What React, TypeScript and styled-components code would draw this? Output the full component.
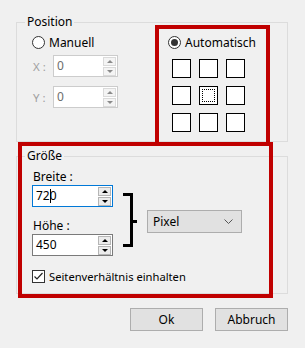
import React from 'react';
import styled, { createGlobalStyle } from 'styled-components';

const GlobalStyle = createGlobalStyle`
  html, body {
    margin: 0;
    padding: 0;
    background: #f0f0f0;
  }
  body {
    font-family: "Noto Sans", "Liberation Sans", sans-serif;
    font-size: 11.5px;
    color: #000;
  }
`;

const Dialog = styled.div`
  position: relative;
  width: 305px;
  height: 348px;
  box-sizing: border-box;
  padding: 22px 17px 0 16px;
  background: #f0f0f0;
  overflow: hidden;
`;

const GroupBox = styled.div<{ $h: number; $mt?: number }>`
  position: relative;
  box-sizing: border-box;
  height: ${p => p.$h}px;
  margin-top: ${p => p.$mt || 0}px;
  border: 1px solid #dcdcdc;
`;

const GroupTitle = styled.span`
  position: absolute;
  left: 8px;
  top: -9px;
  padding: 0 2px;
  line-height: 16px;
  font-size: 12px;
  background: #f0f0f0;
`;

const PositionBody = styled.div`
  display: flex;
  padding: 12px 0 0 15px;
`;

const Column = styled.div<{ $w?: number }>`
  display: flex;
  flex-direction: column;
  width: ${p => (p.$w ? `${p.$w}px` : 'auto')};
`;

const OptionRow = styled.label`
  display: flex;
  align-items: center;
  gap: 4px;
  height: 15px;
  line-height: 15px;
  white-space: nowrap;
  font-size: 12px;
`;

const RadioCircle = styled.span<{ $checked?: boolean }>`
  box-sizing: border-box;
  width: 13px;
  height: 13px;
  border: 1px solid #333;
  border-radius: 50%;
  background: #fff;
  display: flex;
  align-items: center;
  justify-content: center;
  &::after {
    content: '';
    width: 7px;
    height: 7px;
    border-radius: 50%;
    background: #333;
    display: ${p => (p.$checked ? 'block' : 'none')};
  }
`;

const CheckBox = styled.span`
  box-sizing: border-box;
  width: 13px;
  height: 13px;
  border: 1px solid #333;
  background: #fff;
  display: flex;
  align-items: center;
  justify-content: center;
`;

const FieldRow = styled.div<{ $mt: number }>`
  display: flex;
  align-items: center;
  margin-top: ${p => p.$mt}px;
`;

const AxisLabel = styled.span`
  width: 20px;
  padding-left: 1px;
  color: #a0a0a0;
`;

const SpinBox = styled.div<{ $w: number; $state: 'disabled' | 'focus' | 'normal' }>`
  box-sizing: border-box;
  width: ${p => p.$w}px;
  height: 22px;
  display: flex;
  align-items: center;
  padding: 0 1px 0 3px;
  background: #fff;
  border: 1px solid
    ${p => (p.$state === 'focus' ? '#0078d7' : p.$state === 'disabled' ? '#cccccc' : '#7a7a7a')};
`;

const SpinText = styled.span<{ $disabled?: boolean }>`
  flex: 1;
  display: flex;
  align-items: center;
  line-height: 16px;
  font-size: 12px;
  color: ${p => (p.$disabled ? '#6d6d6d' : '#000')};
`;

const Caret = styled.span`
  display: inline-block;
  width: 1px;
  height: 14px;
  background: #000;
  margin: 0 -1px 0 0;
`;

const SpinButtons = styled.div`
  display: flex;
  flex-direction: column;
  gap: 1px;
  width: 13px;
`;

const SpinButton = styled.div<{ $disabled?: boolean }>`
  box-sizing: border-box;
  height: 9px;
  border: 1px solid ${p => (p.$disabled ? '#dadada' : '#b5b5b5')};
  background: ${p => (p.$disabled ? '#f4f4f4' : '#ececec')};
  display: flex;
  align-items: center;
  justify-content: center;
`;

const Arrow = styled.span<{ $dir: 'up' | 'down'; $disabled?: boolean }>`
  width: 0;
  height: 0;
  border-left: 3px solid transparent;
  border-right: 3px solid transparent;
  ${p =>
    p.$dir === 'up'
      ? `border-bottom: 3px solid ${p.$disabled ? '#8a8a8a' : '#000'};`
      : `border-top: 3px solid ${p.$disabled ? '#8a8a8a' : '#000'};`}
`;

const AnchorGrid = styled.div`
  display: grid;
  grid-template-columns: repeat(3, 19px);
  grid-auto-rows: 19px;
  gap: 8px;
  margin: 9px 0 0 4px;
`;

const AnchorCell = styled.div<{ $active?: boolean }>`
  position: relative;
  box-sizing: border-box;
  border: 1px solid #000;
  background: #fff;
  &::after {
    content: '';
    display: ${p => (p.$active ? 'block' : 'none')};
    position: absolute;
    inset: 2px;
    border: 1px dotted #000;
  }
`;

const SizeBody = styled.div`
  padding: 12px 0 0 15px;
`;

const SizeRow = styled.div`
  display: flex;
  align-items: flex-start;
`;

const FieldLabel = styled.span<{ $mt?: number }>`
  height: 16px;
  line-height: 16px;
  padding-left: 1px;
  font-size: 12px;
  margin-top: ${p => p.$mt || 0}px;
`;

const Bracket = styled.svg`
  margin: 24px 0 0 10px;
  flex: none;
`;

const Select = styled.div`
  box-sizing: border-box;
  width: 95px;
  height: 23px;
  margin: 41px 0 0 9px;
  padding: 0 8px 0 5px;
  display: flex;
  align-items: center;
  justify-content: space-between;
  font-size: 12px;
  background: #e1e1e1;
  border: 1px solid #adadad;
`;

const CheckRow = styled(OptionRow)`
  margin-top: 13px;
  font-size: 11.2px;
`;

const ButtonRow = styled.div`
  display: flex;
  justify-content: flex-end;
  gap: 12px;
  margin-top: 14px;
`;

const PushButton = styled.button`
  box-sizing: border-box;
  width: 73px;
  height: 23px;
  padding: 0;
  font: inherit;
  font-size: 12px;
  color: #000;
  background: #e1e1e1;
  border: 1px solid #adadad;
`;

const Highlight = styled.div<{ $x: number; $y: number; $w: number; $h: number }>`
  position: absolute;
  left: ${p => p.$x}px;
  top: ${p => p.$y}px;
  width: ${p => p.$w}px;
  height: ${p => p.$h}px;
  box-sizing: border-box;
  border: 4px solid #c00000;
  pointer-events: none;
`;

const Spin = ({
  width,
  state,
  children,
}: {
  width: number;
  state: 'disabled' | 'focus' | 'normal';
  children: React.ReactNode;
}) => {
  const off = state === 'disabled';
  return (
    <SpinBox $w={width} $state={state}>
      <SpinText $disabled={off}>{children}</SpinText>
      <SpinButtons>
        <SpinButton $disabled={off}>
          <Arrow $dir="up" $disabled={off} />
        </SpinButton>
        <SpinButton $disabled={off}>
          <Arrow $dir="down" $disabled={off} />
        </SpinButton>
      </SpinButtons>
    </SpinBox>
  );
};

export default function App() {
  return (
    <>
      <GlobalStyle />
      <Dialog>
        {/* Position */}
        <GroupBox $h={120}>
          <GroupTitle>Position</GroupTitle>
          <PositionBody>
            <Column $w={136}>
              <OptionRow>
                <RadioCircle />
                <span>Manuell</span>
              </OptionRow>
              <FieldRow $mt={5}>
                <AxisLabel>X :</AxisLabel>
                <Spin width={65} state="disabled">0</Spin>
              </FieldRow>
              <FieldRow $mt={9}>
                <AxisLabel>Y :</AxisLabel>
                <Spin width={65} state="disabled">0</Spin>
              </FieldRow>
            </Column>
            <Column>
              <OptionRow>
                <RadioCircle $checked />
                <span>Automatisch</span>
              </OptionRow>
              <AnchorGrid>
                {Array.from({ length: 9 }).map((_, i) => (
                  <AnchorCell key={i} $active={i === 4} />
                ))}
              </AnchorGrid>
            </Column>
          </PositionBody>
        </GroupBox>

        {/* Größe */}
        <GroupBox $h={138} $mt={14}>
          <GroupTitle>Größe</GroupTitle>
          <SizeBody>
            <SizeRow>
              <Column $w={81}>
                <FieldLabel>Breite :</FieldLabel>
                <Spin width={81} state="focus">
                  72<Caret />0
                </Spin>
                <FieldLabel $mt={11}>Höhe :</FieldLabel>
                <Spin width={81} state="normal">450</Spin>
              </Column>
              <Bracket width="15" height="54" viewBox="0 0 15 54">
                <path d="M0 1.5H8.5V52.5H0M8.5 28.5H14" fill="none" stroke="#000" strokeWidth="3" />
              </Bracket>
              <Select>
                <span>Pixel</span>
                <svg width="9" height="6" viewBox="0 0 9 6">
                  <path d="M0.5 0.5L4.5 4.5L8.5 0.5" fill="none" stroke="#555" strokeWidth="1" />
                </svg>
              </Select>
            </SizeRow>
            <CheckRow>
              <CheckBox>
                <svg width="11" height="11" viewBox="0 0 11 11">
                  <path d="M1.5 5.5L4 8L9.5 2" fill="none" stroke="#222" strokeWidth="1.2" />
                </svg>
              </CheckBox>
              <span>Seitenverhältnis einhalten</span>
            </CheckRow>
          </SizeBody>
        </GroupBox>

        <ButtonRow>
          <PushButton>Ok</PushButton>
          <PushButton>Abbruch</PushButton>
        </ButtonRow>

        <Highlight $x={155} $y={25} $w={115} $h={121} />
        <Highlight $x={18} $y={142} $w={255} $h={156} />
      </Dialog>
    </>
  );
}
